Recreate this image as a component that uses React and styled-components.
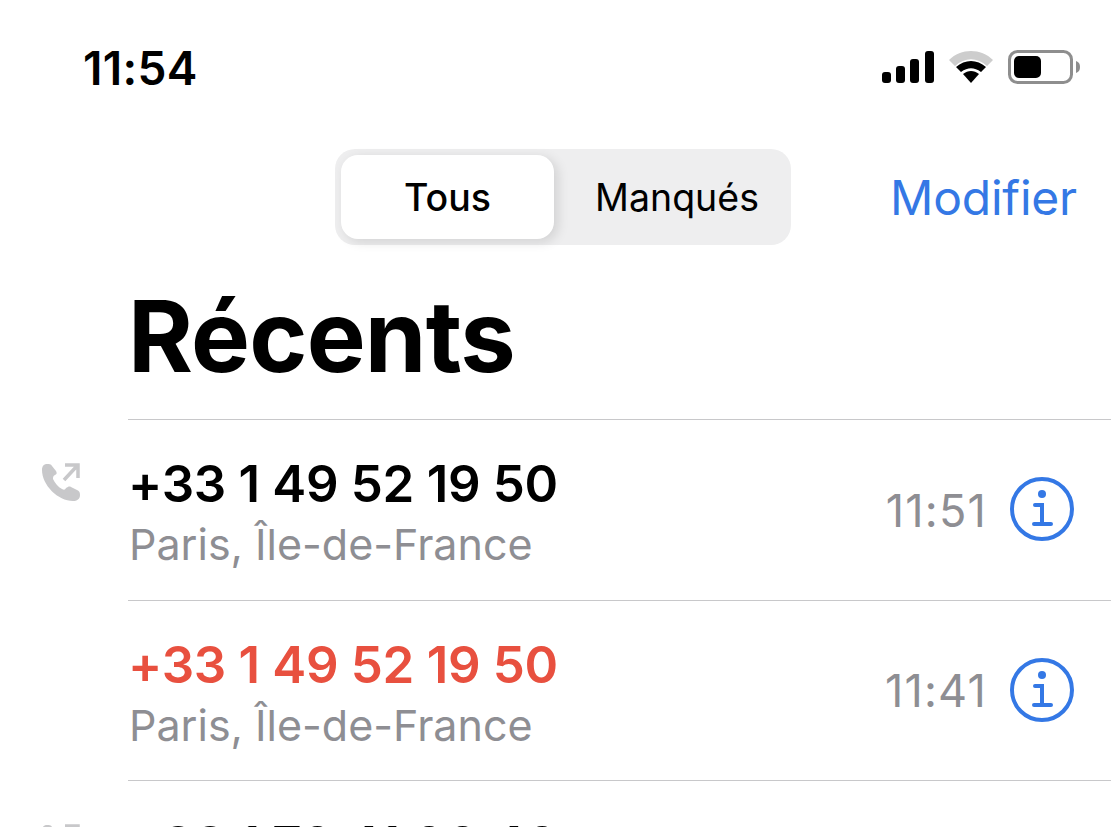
import React from "react";
import styled, { createGlobalStyle } from "styled-components";

const Global = createGlobalStyle`
  html, body {
    margin: 0;
    padding: 0;
    background: #fff;
    overflow: hidden;
  }
  * { box-sizing: border-box; }
`;

const Screen = styled.div`
  width: 1111px;
  height: 827px;
  overflow: hidden;
  background: #fff;
  font-family: Inter, "Liberation Sans", sans-serif;
  color: #000;
`;

const StatusBar = styled.div`
  height: 149px;
  padding: 43px 31px 0 83px;
  display: flex;
  justify-content: space-between;
  align-items: flex-start;
`;

const Clock = styled.div`
  font-size: 46px;
  line-height: 50px;
  font-weight: 600;
  letter-spacing: 0.3px;
`;

const StatusIcons = styled.div`
  display: flex;
  align-items: center;
  gap: 14px;
  padding-top: 7px;
`;

const TopBar = styled.div`
  height: 96px;
  padding-left: 335px;
  padding-right: 34px;
  display: flex;
  justify-content: space-between;
  align-items: center;
`;

const Segments = styled.div`
  width: 456px;
  height: 96px;
  padding: 6px;
  display: flex;
  border-radius: 20px;
  background: #eeeeef;
`;

const Segment = styled.div`
  flex: none;
  width: ${(p) => (p.$active ? "213px" : "231px")};
  height: 84px;
  padding-left: ${(p) => (p.$active ? "0" : "15px")};
  display: flex;
  align-items: center;
  justify-content: center;
  border-radius: 17px;
  font-size: 37.5px;
  font-weight: ${(p) => (p.$active ? 500 : 400)};
  background: ${(p) => (p.$active ? "#fff" : "transparent")};
  box-shadow: ${(p) => (p.$active ? "4px 3px 12px rgba(0, 0, 0, 0.12)" : "none")};
`;

const EditLink = styled.div`
  font-size: 48px;
  color: #3478e5;
  letter-spacing: -0.2px;
`;

const Title = styled.h1`
  margin: 0;
  height: 174px;
  padding: 41px 0 0 128px;
  font-size: 99px;
  line-height: 100px;
  font-weight: 700;
  letter-spacing: -0.8px;
`;

const List = styled.div`
  padding-left: 128px;
`;

const Row = styled.div`
  position: relative;
  height: 180.5px;
  padding: 36px 37px 0 0;
  border-top: 1px solid #c8c8ca;
  display: flex;
  justify-content: space-between;
`;

const CallIcon = styled.svg`
  position: absolute;
  left: -87px;
  top: 43px;
`;

const Caller = styled.div`
  display: flex;
  flex-direction: column;
`;

const Number = styled.div`
  font-size: 51px;
  line-height: 56px;
  font-weight: 600;
  letter-spacing: -0.3px;
  color: ${(p) => (p.$missed ? "#e8503f" : "#000")};
`;

const Place = styled.div`
  font-size: 43px;
  line-height: 52px;
  margin-top: 6px;
  margin-left: 1px;
  color: #8e8e93;
`;

const Trailing = styled.div`
  display: flex;
  align-items: center;
  gap: 23px;
  height: 76px;
  margin-top: 15px;
`;

const Time = styled.div`
  font-size: 45px;
  line-height: 76px;
  padding-top: 3px;
  letter-spacing: 1.2px;
  color: #8e8e93;
`;

const SignalIcon = () => (
  <svg width="52" height="32" viewBox="0 0 52 32" fill="#000">
    <rect x="0" y="21" width="9" height="11" rx="3" />
    <rect x="14" y="15" width="9" height="17" rx="3" />
    <rect x="28" y="8" width="9" height="24" rx="3" />
    <rect x="43" y="0" width="9" height="32" rx="3" />
  </svg>
);

const WifiIcon = () => (
  <svg width="46" height="34" viewBox="0 0 46 34">
    <path d="M1 10 C13 -2 33 -2 45 10 L39 16 C29 7 17 7 7 16 Z" fill="#cdcdcd" />
    <path d="M8 17 C17 9 29 9 38 17 L33 22 C26 17 20 17 13 22 Z" fill="#000" />
    <path d="M15 24 C20 20 26 20 31 24 L23 33 Z" fill="#000" />
  </svg>
);

const BatteryIcon = () => (
  <svg width="72" height="34" viewBox="0 0 72 34">
    <rect x="1.5" y="1.5" width="62" height="31" rx="8" fill="none" stroke="#8e8e8e" strokeWidth="3" />
    <rect x="6" y="6" width="27" height="22" rx="5" fill="#000" />
    <path d="M68 11 C71 12 72 14 72 17 C72 20 71 22 68 23 Z" fill="#8e8e8e" />
  </svg>
);

const OutgoingIcon = () => (
  <CallIcon width="40" height="40" viewBox="0 0 40 40" fill="#c8c8ca">
    <path d="M6 1 C3 1 1 3 1 7 C1 22 17 38 32 38 C36 38 39 36 39 32 C39 29 38 28 36 27 L30 24 C28 23 27 24 25 25 C24 27 23 27 21 26 C17 24 14 20 12 16 C12 14 12 13 14 12 C16 11 16 10 15 8 L11 3 C10 1 8 1 6 1 Z" />
    <path d="M24 2 H37 V15 M36 3 L23 17" fill="none" stroke="#c8c8ca" strokeWidth="3.5" />
  </CallIcon>
);

const InfoIcon = () => (
  <svg width="64" height="64" viewBox="0 0 64 64">
    <circle cx="32" cy="32" r="30" fill="none" stroke="#3478e5" strokeWidth="4" />
    <circle cx="32" cy="17" r="4" fill="#3478e5" />
    <path d="M25 28 H32 V47 M24 47 H41" fill="none" stroke="#3478e5" strokeWidth="4" strokeLinecap="round" />
  </svg>
);

const calls = [
  { number: "+33 1 49 52 19 50", place: "Paris, Île-de-France", time: "11:51", outgoing: true },
  { number: "+33 1 49 52 19 50", place: "Paris, Île-de-France", time: "11:41", missed: true },
  { number: "+33 1 70 41 00 40", place: "Paris, Île-de-France", time: "11:30", outgoing: true },
];

export default function App() {
  return (
    <Screen>
      <Global />
      <StatusBar>
        <Clock>11:54</Clock>
        <StatusIcons>
          <SignalIcon />
          <WifiIcon />
          <BatteryIcon />
        </StatusIcons>
      </StatusBar>
      <TopBar>
        <Segments>
          <Segment $active>Tous</Segment>
          <Segment>Manqués</Segment>
        </Segments>
        <EditLink>Modifier</EditLink>
      </TopBar>
      <Title>Récents</Title>
      <List>
        {calls.map((call, i) => (
          <Row key={i}>
            {call.outgoing && <OutgoingIcon />}
            <Caller>
              <Number $missed={call.missed}>{call.number}</Number>
              <Place>{call.place}</Place>
            </Caller>
            <Trailing>
              <Time>{call.time}</Time>
              <InfoIcon />
            </Trailing>
          </Row>
        ))}
      </List>
    </Screen>
  );
}
